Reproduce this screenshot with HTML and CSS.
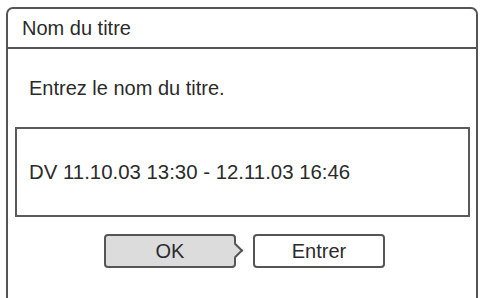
FILE: index.html
```html
<!DOCTYPE html>
<html lang="fr">
<head>
<meta charset="utf-8">
<title>Nom du titre</title>
<link rel="stylesheet" href="styles.css">
</head>
<body>
<div class="dialog">
  <div class="header">Nom du titre</div>
  <div class="prompt">Entrez le nom du titre.</div>
  <div class="field">DV 11.10.03 13:30 - 12.11.03 16:46</div>
  <div class="buttons">
    <div class="btn btn-ok">OK</div>
    <div class="btn">Entrer</div>
  </div>
</div>
</body>
</html>
```

FILE: styles.css
```css
html, body {
  margin: 0;
  padding: 0;
  background: #fff;
  height: 298px;
  overflow: hidden;
}
body {
  font-family: "Liberation Sans", Arial, sans-serif;
  font-size: 20px;
  color: #2b2b2b;
}
.dialog {
  margin: 7px 0 0 6px;
  width: 468px;
  height: 300px;
  border: 2px solid #555;
  border-bottom: none;
  border-radius: 7px 7px 0 0;
}
.header {
  height: 38px;
  line-height: 38px;
  padding-left: 14px;
  border-bottom: 2px solid #555;
}
.prompt {
  height: 78px;
  display: flex;
  align-items: center;
  padding-left: 21px;
  line-height: 23px;
}
.field {
  margin: 0 6px 0 7px;
  height: 86px;
  line-height: 86px;
  border: 2px solid #5a5a5a;
  padding-left: 12px;
  font-size: 20.4px;
}
.buttons {
  display: flex;
  gap: 17px;
  margin-top: 17px;
  padding-left: 96px;
}
.btn {
  position: relative;
  width: 128px;
  height: 30px;
  line-height: 30px;
  text-align: center;
  border: 2px solid #555;
  border-radius: 4px;
  background: #fff;
}
.btn-ok {
  background: #dcdcdc;
}
.btn-ok::after {
  content: "";
  position: absolute;
  right: -7px;
  top: 50%;
  width: 9px;
  height: 9px;
  margin-top: -6px;
  background: #dcdcdc;
  border-top: 2px solid #555;
  border-right: 2px solid #555;
  transform: rotate(45deg);
}
```
